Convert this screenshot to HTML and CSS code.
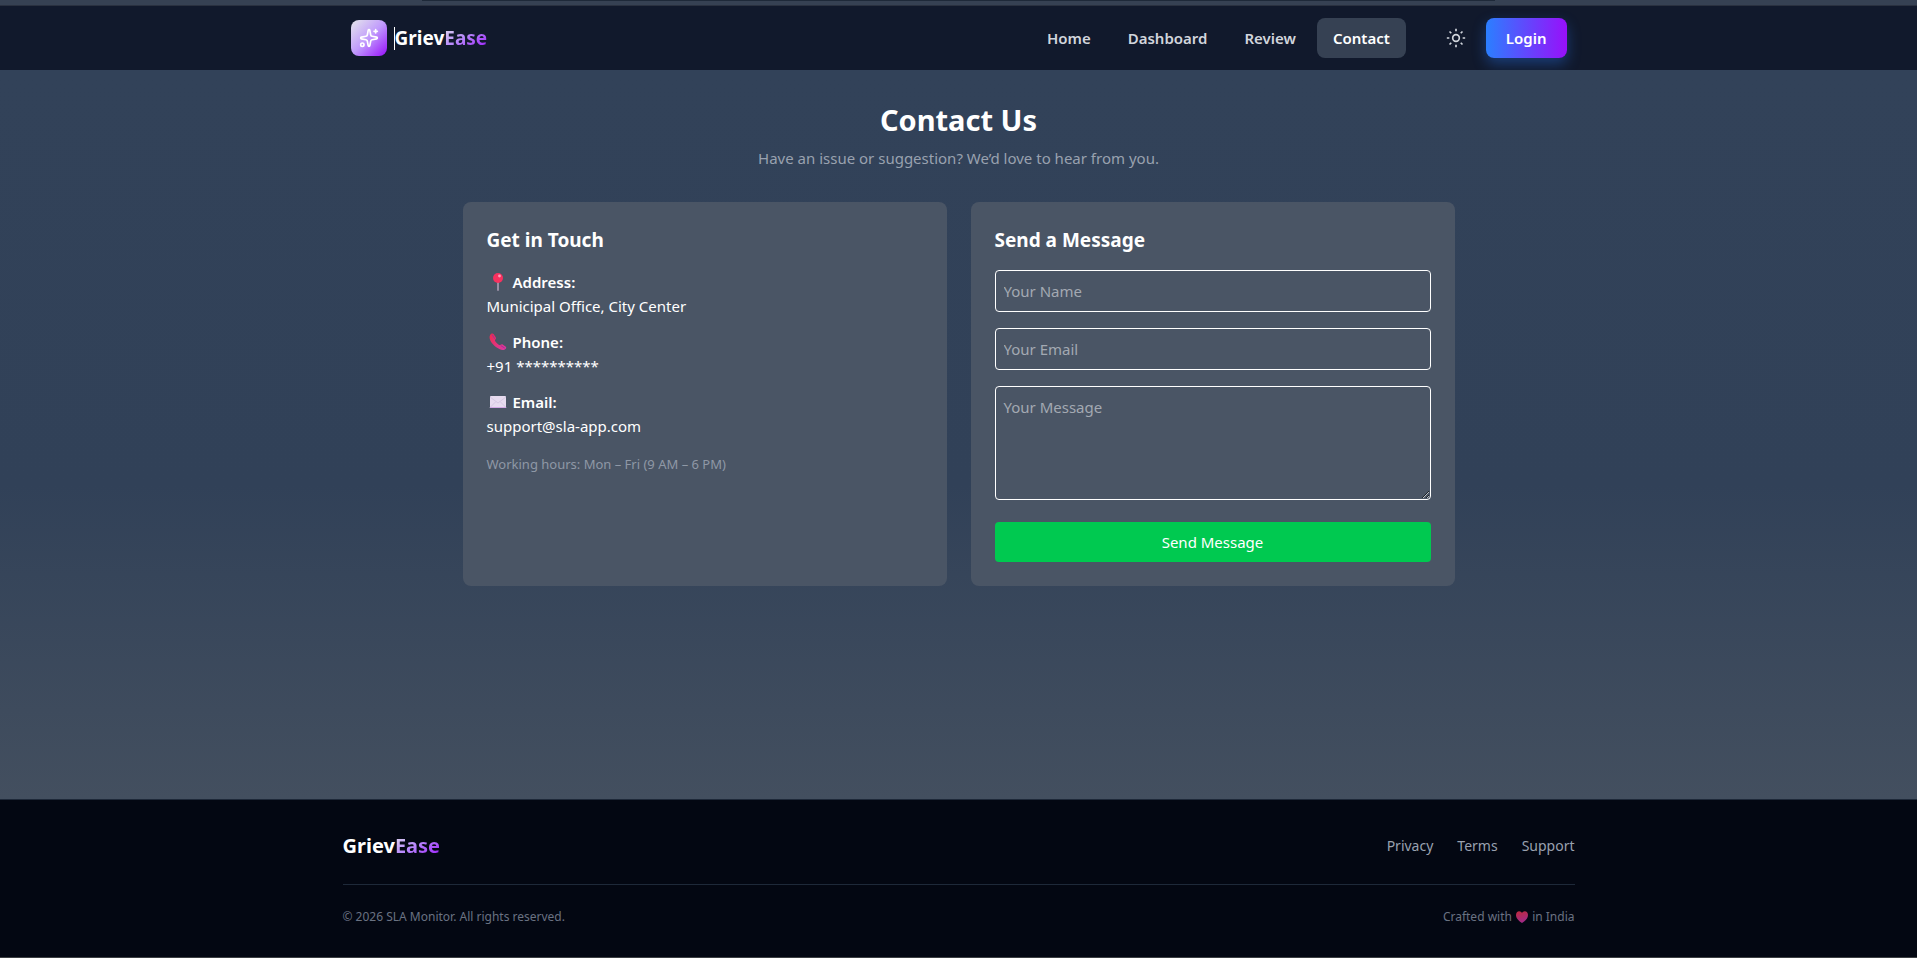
FILE: index.html
```html
<!DOCTYPE html>
<html lang="en">
<head>
<meta charset="utf-8">
<title>GrievEase – Contact Us</title>
<link rel="stylesheet" href="styles.css">
</head>
<body>
<div class="top-strip"><div class="top-strip-edge"></div></div>
<header class="navbar">
  <div class="nav-inner">
    <a class="brand" href="#">
      <span class="brand-mark">
        <svg width="20" height="20" viewBox="0 0 24 24" fill="none" stroke="currentColor" stroke-width="2" stroke-linecap="round" stroke-linejoin="round" aria-hidden="true"><path d="M11.017 2.814a1 1 0 0 1 1.966 0l1.051 5.558a2 2 0 0 0 1.594 1.594l5.558 1.051a1 1 0 0 1 0 1.966l-5.558 1.051a2 2 0 0 0-1.594 1.594l-1.051 5.558a1 1 0 0 1-1.966 0l-1.051-5.558a2 2 0 0 0-1.594-1.594l-5.558-1.051a1 1 0 0 1 0-1.966l5.558-1.051a2 2 0 0 0 1.594-1.594z"/><path d="M20 2v4"/><path d="M22 4h-4"/><circle cx="4" cy="20" r="2"/></svg>
      </span>
      <span class="brand-name caret">Griev<span class="brand-accent">Ease</span></span>
    </a>
    <nav class="nav-links">
      <a class="nav-link" href="#">Home</a>
      <a class="nav-link" href="#">Dashboard</a>
      <a class="nav-link" href="#">Review</a>
      <a class="nav-link active" href="#">Contact</a>
    </nav>
    <div class="nav-actions">
      <button class="theme-toggle" type="button" aria-label="Toggle theme">
        <svg width="20" height="20" viewBox="0 0 24 24" fill="none" stroke="currentColor" stroke-width="2" stroke-linecap="butt" stroke-linejoin="round" aria-hidden="true"><circle cx="12" cy="12" r="4"/><path d="M12 1v3M12 20v3M4.220 4.220l2.120 2.120M17.660 17.660l2.120 2.120M1 12h3M20 12h3M6.340 17.660l-2.120 2.120M19.780 4.220l-2.120 2.120"/></svg>
      </button>
      <button class="login" type="button">Login</button>
    </div>
  </div>
</header>

<main class="page">
  <div class="content">
    <h1 class="title">Contact Us</h1>
    <p class="subtitle">Have an issue or suggestion? We’d love to hear from you.</p>
    <div class="cards">
      <section class="card">
        <h2 class="card-title">Get in Touch</h2>
        <div class="contact-list">
          <p><span class="label"><svg class="emoji" viewBox="0 0 20 20" aria-hidden="true"><rect x="9" y="9" width="2" height="10" rx="1" fill="#998ea4"/><circle cx="10" cy="6" r="5" fill="#f8315f"/><circle cx="11.500" cy="4" r="1.400" fill="#ff9dba"/></svg>Address:</span><br>Municipal Office, City Center</p>
          <p><span class="label"><svg class="emoji" viewBox="0 0 20 20" aria-hidden="true"><defs><linearGradient id="ph" x1="0" y1="0" x2="1" y2="1"><stop offset="0" stop-color="#f02b4b"/><stop offset="1" stop-color="#d93aa5"/></linearGradient></defs><path d="M3 2c1-.8 2-.6 2.700.3l2 3c.5.900.4 1.600-.4 2.300-.5.500-.5 1 .1 1.900.9 1.400 2 2.400 3.300 3.300.8.500 1.300.5 1.900 0 .8-.7 1.600-.7 2.400-.1l2.500 1.800c.9.700.9 1.500.2 2.300-1.500 1.700-4 1.500-6.300.3C6.600 14.600 2.500 10.500 1.700 6.500 1.400 4.500 1.800 3 3 2z" fill="url(#ph)"/><path d="M4 2.500l2.800 4.300M12.700 13.500l4 2.600" stroke="#a02f9b" stroke-width="1" fill="none"/></svg>Phone:</span><br>+91 **********</p>
          <p><span class="label"><svg class="emoji" viewBox="0 0 20 20" aria-hidden="true"><rect x="2" y="4" width="16" height="12" rx="1" fill="#e7dbef"/><path d="M2 5l8 6 8-6M2 15.500l6-6M18 15.500l-6-6" stroke="#d6c8e3" fill="none"/><path d="M2 15.500h16" stroke="#d3a9e6"/></svg>Email:</span><br>support@sla-app.com</p>
        </div>
        <p class="hours">Working hours: Mon – Fri (9 AM – 6 PM)</p>
      </section>
      <section class="card">
        <h2 class="card-title">Send a Message</h2>
        <form class="form">
          <input class="field" type="text" placeholder="Your Name" aria-label="Your Name">
          <input class="field" type="email" placeholder="Your Email" aria-label="Your Email">
          <textarea class="field message" placeholder="Your Message" aria-label="Your Message"></textarea>
          <button class="send" type="button">Send Message</button>
        </form>
      </section>
    </div>
  </div>
</main>

<footer class="footer">
  <div class="footer-inner">
    <div class="footer-row">
      <div class="brand-name footer-brand">Griev<span class="brand-accent">Ease</span></div>
      <nav class="footer-links">
        <a href="#">Privacy</a>
        <a href="#">Terms</a>
        <a href="#">Support</a>
      </nav>
    </div>
    <div class="footer-row legal">
      <p>© 2026 SLA Monitor. All rights reserved.</p>
      <p class="crafted">Crafted with <svg class="heart" viewBox="0 0 14 14" aria-hidden="true"><defs><linearGradient id="ht" x1="0" y1="0" x2="0.300" y2="1"><stop offset="0" stop-color="#c02a3c"/><stop offset="1" stop-color="#a02a86"/></linearGradient></defs><path d="M7 13C4 11 1 8.500 1 5c0-2.300 1.400-3.800 3.200-3.800C5.500 1.200 6.400 2 7 3c.6-1 1.500-1.800 2.800-1.800C11.600 1.200 13 2.700 13 5c0 3.500-3 6-6 8z" fill="url(#ht)"/></svg> in India</p>
    </div>
  </div>
</footer>
</body>
</html>
```
FILE: styles.css
```css
* { box-sizing: border-box; margin: 0; padding: 0; }

body {
  min-height: 100vh;
  display: flex;
  flex-direction: column;
  font-family: "Noto Sans", "Open Sans", sans-serif;
  font-size: 15px;
  line-height: 24px;
  color: #fff;
  background: #314158;
}

a { color: inherit; text-decoration: none; }
button, input, textarea { font: inherit; color: inherit; }
button { border: 0; cursor: pointer; }

.top-strip {
  height: 6px;
  background: #364153;
  border-bottom: 1px solid #2a3140;
}
.top-strip-edge {
  width: 56%;
  height: 1px;
  margin: 0 auto;
  background: #1e2939;
}

.navbar { background: #11192c; }
.nav-inner {
  max-width: 1280px;
  height: 64px;
  margin: 0 auto;
  padding: 0 32px;
  display: flex;
  align-items: center;
}
.brand {
  display: flex;
  align-items: center;
  gap: 8px;
  margin-right: auto;
}
.brand-mark {
  width: 36px;
  height: 36px;
  border-radius: 8px;
  display: grid;
  place-items: center;
  background: linear-gradient(to bottom right, #e5e7eb, #c09afc 50%, #9810fa);
}
.brand-name {
  font-size: 19px;
  line-height: 28px;
  font-weight: 700;
}
.brand-accent {
  color: transparent;
  background: linear-gradient(to bottom right, #e5e7eb, #b98bfb 45%, #9810fa);
  background-clip: text;
  -webkit-background-clip: text;
}
.caret { line-height: 23px; box-shadow: -1px 0 0 #fff; }

.nav-links { display: flex; gap: 5px; }
.nav-link {
  padding: 8px 16px;
  border-radius: 8px;
  font-weight: 600;
  color: #d1d5dc;
}
.nav-link.active { background: #364153; color: #fff; }

.nav-actions {
  display: flex;
  align-items: center;
  gap: 12px;
  margin-left: 32px;
}
.theme-toggle {
  width: 36px;
  height: 36px;
  display: grid;
  place-items: center;
  color: #d1d5dc;
  background: transparent;
}
.login {
  padding: 8px 20px;
  border-radius: 8px;
  font-weight: 600;
  background: linear-gradient(to right, #2b7fff, #9810fa);
  box-shadow: 0 6px 14px rgba(43, 127, 255, 0.35);
}

.page {
  flex: 1;
  background: linear-gradient(to bottom, #324259, #314158 57%, #434f5f);
}
.content {
  max-width: 1024px;
  margin: 0 auto;
  padding: 32px 16px;
}
.title {
  font-size: 29px;
  line-height: 36px;
  font-weight: 700;
  text-align: center;
}
.subtitle {
  margin: 8px 0 32px;
  text-align: center;
  color: #99a1af;
}
.cards {
  display: grid;
  grid-template-columns: 1fr 1fr;
  gap: 24px;
}
.card {
  padding: 24px;
  border-radius: 8px;
  background: #4a5565;
}
.card-title {
  margin-bottom: 16px;
  font-size: 19px;
  line-height: 28px;
  font-weight: 700;
}
.contact-list { display: grid; gap: 12px; }
.label { font-weight: 600; }
.emoji {
  width: 20px;
  height: 20px;
  margin: 0 5px 0 1px;
  vertical-align: -4px;
}
.hours {
  margin-top: 16px;
  font-size: 13px;
  line-height: 20px;
  color: #8f98a6;
}

.form { display: flex; flex-direction: column; gap: 16px; }
.field {
  width: 100%;
  padding: 8px;
  border: 1px solid #fff;
  border-radius: 4px;
  background: transparent;
}
.field::placeholder { color: #a3a9b2; opacity: 1; }
.message { height: 114px; margin-bottom: 6px; resize: vertical; }
.send {
  padding: 8px;
  border-radius: 4px;
  background: #00c950;
}

.footer {
  background: #030712;
  border-top: 1px solid #1e2939;
  border-bottom: 1px solid #3d4043;
}
.footer-inner {
  max-width: 1280px;
  margin: 0 auto;
  padding: 32px 24px;
}
.footer-row {
  display: flex;
  align-items: center;
  justify-content: space-between;
}
.footer-brand { font-size: 20px; }
.footer-links {
  display: flex;
  gap: 24px;
  font-size: 14px;
  line-height: 20px;
  color: #99a1af;
}
.legal {
  margin-top: 24px;
  padding-top: 24px;
  border-top: 1px solid #1e2939;
  font-size: 12px;
  line-height: 16px;
  color: #6a7282;
}
.heart {
  width: 14px;
  height: 14px;
  vertical-align: -3px;
}
```
